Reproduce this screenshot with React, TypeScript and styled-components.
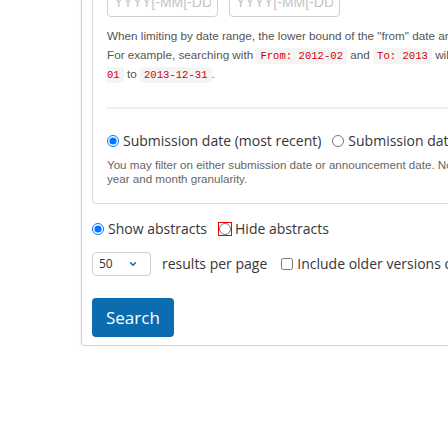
import styled, { createGlobalStyle } from "styled-components";
import { ChevronDown } from "lucide-react";

const GlobalStyle = createGlobalStyle`
  html, body {
    margin: 0;
    padding: 0;
    background: #fff;
    overflow: hidden;
  }
  body {
    font-family: "Open Sans", "Noto Sans", sans-serif;
    color: #363636;
  }
`;

const Page = styled.div`
  padding-left: 81px;
  margin-top: -35px;
`;

const Card = styled.form`
  width: 700px;
  border: 1px solid #d2d2d2;
  border-radius: 4px;
  box-shadow: 0 1px 2px rgba(0, 0, 0, 0.14);
  padding: 10px 11px 8px 10px;
`;

const DateBox = styled.fieldset`
  margin: 0;
  border: 1px solid #dcdcdc;
  border-radius: 4px;
  padding: 10px 14px 17px;
`;

const InputRow = styled.div`
  display: flex;
  gap: 11px;
`;

const DateInput = styled.input`
  box-sizing: border-box;
  width: 111px;
  height: 30px;
  border: 1px solid #cfcfcf;
  border-radius: 4px;
  padding: 0 6px;
  font-family: "Liberation Sans", Arial, sans-serif;
  font-size: 14px;
  &::placeholder {
    color: #c4c4c4;
  }
`;

const Help = styled.p`
  margin: 10px 0 0;
  font-family: "Liberation Sans", Arial, sans-serif;
  font-size: 11.7px;
  line-height: 18.5px;
  color: #555;
  white-space: nowrap;
`;

const Code = styled.code`
  font-family: "Liberation Mono", "Courier New", monospace;
  font-size: 10.6px;
  color: #d40000;
  background: #f4f4f4;
  padding: 2px 4px;
  border-radius: 2px;
  box-decoration-break: slice;
`;

const Rule = styled.hr`
  margin: 22px 0 0;
  border: 0;
  height: 2px;
  background: #eeeeee;
`;

const OptionRow = styled.div<{ $top: number; $gap: number }>`
  display: flex;
  align-items: center;
  gap: ${(p) => p.$gap}px;
  margin-top: ${(p) => p.$top}px;
  height: 20px;
  font-size: 14px;
  white-space: nowrap;
`;

const Choice = styled.label`
  display: flex;
  align-items: center;
  gap: 4px;
  color: #363636;
`;

const Radio = styled.input<{ $flag?: boolean }>`
  margin: 0;
  width: 12px;
  height: 12px;
  outline: ${(p) => (p.$flag ? "1px solid #e00" : "none")};
  outline-offset: 0;
`;

const Note = styled.p`
  margin: 7px 0 0;
  font-family: "Liberation Sans", Arial, sans-serif;
  font-size: 11.6px;
  line-height: 14px;
  color: #666;
  white-space: nowrap;
`;

const SelectWrap = styled.div`
  position: relative;
  width: 59px;
  height: 24px;
`;

const Select = styled.select`
  box-sizing: border-box;
  appearance: none;
  width: 100%;
  height: 100%;
  border: 1px solid #cfcfcf;
  border-radius: 4px;
  background: #fff;
  padding: 0 0 0 6px;
  font-family: "Open Sans", sans-serif;
  font-size: 12px;
  color: #363636;
`;

const Chevron = styled(ChevronDown)`
  position: absolute;
  right: 13px;
  top: 7px;
  color: #0b6db3;
  pointer-events: none;
`;

const ResultsRow = styled.div`
  display: flex;
  align-items: center;
  margin-top: 13px;
  font-size: 14px;
  white-space: nowrap;
`;

const ResultsLabel = styled.span`
  margin: 0 14px 0 11px;
`;

const SearchButton = styled.button`
  margin-top: 22px;
  height: 39px;
  padding: 0 14px;
  border: 0;
  border-radius: 4px;
  background: #0b6cb0;
  color: #fff;
  font-family: "Open Sans", sans-serif;
  font-size: 17px;
  cursor: pointer;
`;

export default function App() {
  return (
    <>
      <GlobalStyle />
      <Page>
        <Card onSubmit={(e) => e.preventDefault()}>
          <DateBox>
            <InputRow>
              <DateInput placeholder="YYYY[-MM[-DD]]" />
              <DateInput placeholder="YYYY[-MM[-DD]]" />
            </InputRow>
            <Help>
              When limiting by date range, the lower bound of the "from" date and the upper bound of the "to" date are used.
              <br />
              For example, searching with <Code>From: 2012-02</Code> and <Code>To: 2013</Code> will search for papers submitted from{" "}
              <Code>
                2012-02-
                <br />
                01
              </Code>{" "}
              to <Code>2013-12-31</Code>.
            </Help>
            <Rule />
            <OptionRow $top={22} $gap={11}>
              <Choice>
                <Radio type="radio" name="date_type" defaultChecked />
                Submission date (most recent)
              </Choice>
              <Choice>
                <Radio type="radio" name="date_type" />
                Submission date (original)
              </Choice>
            </OptionRow>
            <Note>
              You may filter on either submission date or announcement date. Note that announcement date supports only
              <br />
              year and month granularity.
            </Note>
          </DateBox>
          <OptionRow $top={15} $gap={12}>
            <Choice>
              <Radio type="radio" name="abstracts" defaultChecked />
              Show abstracts
            </Choice>
            <Choice>
              <Radio type="radio" name="abstracts" $flag />
              Hide abstracts
            </Choice>
          </OptionRow>
          <ResultsRow>
            <SelectWrap>
              <Select defaultValue="50">
                <option>25</option>
                <option>50</option>
                <option>100</option>
                <option>200</option>
              </Select>
              <Chevron size={10} strokeWidth={3.5} />
            </SelectWrap>
            <ResultsLabel>results per page</ResultsLabel>
            <Choice>
              <Radio type="checkbox" />
              Include older versions of papers
            </Choice>
          </ResultsRow>
          <SearchButton type="submit">Search</SearchButton>
        </Card>
      </Page>
    </>
  );
}
